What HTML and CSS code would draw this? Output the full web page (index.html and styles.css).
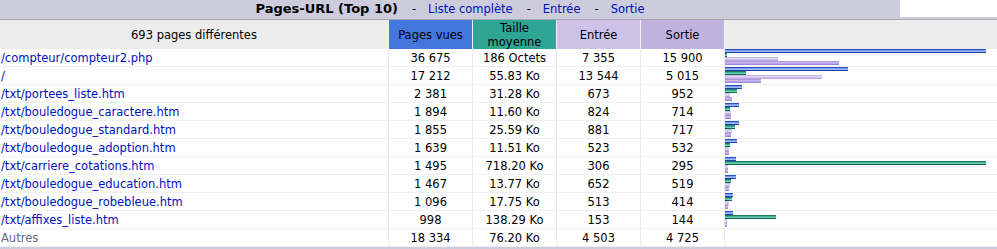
FILE: index.html
```html
<!DOCTYPE html>
<html lang="fr">
<head>
<meta charset="utf-8">
<title>Pages-URL (Top 10)</title>
<link rel="stylesheet" href="styles.css">
</head>
<body>
<div class="section">
  <div class="titlebar">
    <div class="title"><b class="title-text">Pages-URL (Top 10)</b><span class="sep">-</span><a href="#">Liste complète</a><span class="sep">-</span><a href="#">Entrée</a><span class="sep">-</span><a href="#">Sortie</a></div>
    <div class="blank"></div>
  </div>
  <div class="frame">
    <table class="data">
      <colgroup>
        <col class="c-url"><col class="c-num"><col class="c-num"><col class="c-num"><col class="c-num"><col class="c-bar">
      </colgroup>
      <thead>
        <tr>
          <th>693 pages différentes</th>
          <th class="h-pages">Pages vues</th>
          <th class="h-size">Taille<br>moyenne</th>
          <th class="h-entry">Entrée</th>
          <th class="h-exit">Sortie</th>
          <th></th>
        </tr>
      </thead>
      <tbody>
        <tr><td class="url"><a href="#">/compteur/compteur2.php</a></td><td>36 675</td><td>186 Octets</td><td>7 355</td><td>15 900</td>
          <td class="bars"><i class="b bp" style="width:261px"></i><i class="b bk" style="width:2px"></i><i class="b be" style="width:53px"></i><i class="b bx" style="width:114px"></i></td></tr>
        <tr><td class="url"><a href="#">/</a></td><td>17 212</td><td>55.83 Ko</td><td>13 544</td><td>5 015</td>
          <td class="bars"><i class="b bp" style="width:123px"></i><i class="b bk" style="width:21px"></i><i class="b be" style="width:97px"></i><i class="b bx" style="width:36px"></i></td></tr>
        <tr><td class="url"><a href="#">/txt/portees_liste.htm</a></td><td>2 381</td><td>31.28 Ko</td><td>673</td><td>952</td>
          <td class="bars"><i class="b bp" style="width:17px"></i><i class="b bk" style="width:12px"></i><i class="b be" style="width:5px"></i><i class="b bx" style="width:7px"></i></td></tr>
        <tr><td class="url"><a href="#">/txt/bouledogue_caractere.htm</a></td><td>1 894</td><td>11.60 Ko</td><td>824</td><td>714</td>
          <td class="bars"><i class="b bp" style="width:14px"></i><i class="b bk" style="width:5px"></i><i class="b be" style="width:6px"></i><i class="b bx" style="width:6px"></i></td></tr>
        <tr><td class="url"><a href="#">/txt/bouledogue_standard.htm</a></td><td>1 855</td><td>25.59 Ko</td><td>881</td><td>717</td>
          <td class="bars"><i class="b bp" style="width:14px"></i><i class="b bk" style="width:10px"></i><i class="b be" style="width:7px"></i><i class="b bx" style="width:6px"></i></td></tr>
        <tr><td class="url"><a href="#">/txt/bouledogue_adoption.htm</a></td><td>1 639</td><td>11.51 Ko</td><td>523</td><td>532</td>
          <td class="bars"><i class="b bp" style="width:12px"></i><i class="b bk" style="width:5px"></i><i class="b be" style="width:4px"></i><i class="b bx" style="width:4px"></i></td></tr>
        <tr><td class="url"><a href="#">/txt/carriere_cotations.htm</a></td><td>1 495</td><td>718.20 Ko</td><td>306</td><td>295</td>
          <td class="bars"><i class="b bp" style="width:11px"></i><i class="b bk" style="width:261px"></i><i class="b be" style="width:3px"></i><i class="b bx" style="width:3px"></i></td></tr>
        <tr><td class="url"><a href="#">/txt/bouledogue_education.htm</a></td><td>1 467</td><td>13.77 Ko</td><td>652</td><td>519</td>
          <td class="bars"><i class="b bp" style="width:11px"></i><i class="b bk" style="width:6px"></i><i class="b be" style="width:5px"></i><i class="b bx" style="width:4px"></i></td></tr>
        <tr><td class="url"><a href="#">/txt/bouledogue_robebleue.htm</a></td><td>1 096</td><td>17.75 Ko</td><td>513</td><td>414</td>
          <td class="bars"><i class="b bp" style="width:8px"></i><i class="b bk" style="width:7px"></i><i class="b be" style="width:4px"></i><i class="b bx" style="width:3px"></i></td></tr>
        <tr><td class="url"><a href="#">/txt/affixes_liste.htm</a></td><td>998</td><td>138.29 Ko</td><td>153</td><td>144</td>
          <td class="bars"><i class="b bp" style="width:8px"></i><i class="b bk" style="width:51px"></i><i class="b be" style="width:2px"></i><i class="b bx" style="width:2px"></i></td></tr>
        <tr><td class="url"><span class="others">Autres</span></td><td>18 334</td><td>76.20 Ko</td><td>4 503</td><td>4 725</td><td class="bars"></td></tr>
      </tbody>
    </table>
  </div>
</div>
</body>
</html>
```

FILE: styles.css
```css
html, body {
  margin: 0;
  padding: 0;
  background: #ffffff;
  overflow: hidden;
}

body {
  font-family: "DejaVu Sans", Verdana, sans-serif;
  font-size: 11.5px;
  color: #000000;
}

a {
  color: #0011bb;
  text-decoration: none;
}

.section {
  width: 997px;
}

.titlebar {
  display: flex;
  height: 17px;
}

.title {
  width: 900px;
  background: #ccccdd;
  text-align: center;
  line-height: 17px;
  font-size: 11.5px;
  white-space: nowrap;
}

.title-text {
  font-size: 13px;
  font-weight: bold;
}

.sep {
  display: inline-block;
  margin: 0 12px 0 14px;
  color: #000000;
}

.blank {
  flex: 1;
  background: #ffffff;
}

.frame {
  background: #ccccdd;
  padding: 2px 0 3px 0;
}

.data {
  width: 997px;
  table-layout: fixed;
  border-collapse: separate;
  border-spacing: 0;
  border-top: 1px solid #a8a8b0;
  background: #ffffff;
}

.c-url { width: 389px; }
.c-num { width: 84px; }
.c-bar { width: 272px; }

.data th,
.data td {
  box-sizing: border-box;
  padding: 0 1px;
  border-right: 1px solid #ececec;
  font-weight: normal;
  text-align: center;
  white-space: nowrap;
  overflow: hidden;
}

.data th {
  height: 29px;
  line-height: 14px;
  padding-top: 1px;
  background: #ececec;
  border-right-color: #f2f2f2;
}

.data td {
  height: 18px;
  line-height: 16px;
  padding-top: 1px;
  border-bottom: 1px solid #f0f0f0;
}

.data th:last-child,
.data td:last-child {
  border-right: none;
}

.h-pages { background: #4477dd !important; }
.h-size { background: #2ea495 !important; }
.h-entry { background: #cec2e8 !important; }
.h-exit { background: #c1b2e0 !important; }

.data td.url {
  text-align: left;
  padding-left: 1px;
}

.others {
  color: #666688;
}

.data td.bars {
  padding: 0;
  vertical-align: top;
}

.b {
  display: block;
  height: 4px;
}

.bp {
  background: linear-gradient(#2a4fc0 0 25%, #7a9cf0 25% 50%, #9db8f6 50% 75%, #1d3fa8 75%);
}

.bk {
  background: linear-gradient(#1f7a63 0 25%, #3cb396 25% 50%, #74cdb0 50% 75%, #146450 75%);
}

.be {
  background: linear-gradient(#c8bae6 0 25%, #ddd2f2 25% 50%, #d2c6ee 50% 75%, #b9a8de 75%);
}

.bx {
  background: linear-gradient(#b39ae0 0 25%, #c8b4ee 25% 50%, #bca6e8 50% 75%, #9f84d4 75%);
}
```
